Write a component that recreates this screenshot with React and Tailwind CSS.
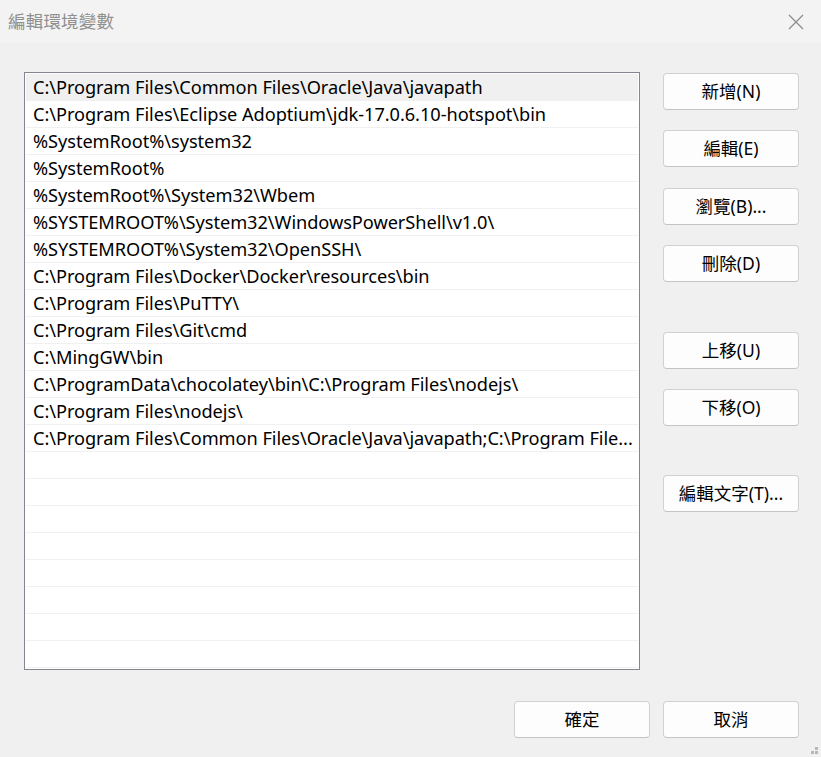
import React from 'react'

const PATHS = [
  'C:\\Program Files\\Common Files\\Oracle\\Java\\javapath',
  'C:\\Program Files\\Eclipse Adoptium\\jdk-17.0.6.10-hotspot\\bin',
  '%SystemRoot%\\system32',
  '%SystemRoot%',
  '%SystemRoot%\\System32\\Wbem',
  '%SYSTEMROOT%\\System32\\WindowsPowerShell\\v1.0\\',
  '%SYSTEMROOT%\\System32\\OpenSSH\\',
  'C:\\Program Files\\Docker\\Docker\\resources\\bin',
  'C:\\Program Files\\PuTTY\\',
  'C:\\Program Files\\Git\\cmd',
  'C:\\MingGW\\bin',
  'C:\\ProgramData\\chocolatey\\bin\\C:\\Program Files\\nodejs\\',
  'C:\\Program Files\\nodejs\\',
  // 清單本身就以省略號顯示
  'C:\\Program Files\\Common Files\\Oracle\\Java\\javapath;C:\\Program File...',
]

const TOTAL_ROWS = 22

const FONT = { fontFamily: '"Noto Sans", "Noto Sans CJK TC", sans-serif' }

function DlgButton({ children, className = '' }) {
  return (
    <button
      className={`w-[136px] h-[37px] flex items-center justify-center rounded-[4px] border border-[#d1d1d1] border-b-[#c4c4c4] bg-[#fdfdfd] text-[17.5px] text-black ${className}`}
    >
      {children}
    </button>
  )
}

export default function App() {
  const rows = Array.from({ length: TOTAL_ROWS }, (_, i) => PATHS[i] ?? '')

  return (
    <div className="w-[821px] h-[757px] flex flex-col bg-[#f0f0f0] overflow-hidden relative" style={FONT}>
      {/* 標題列 */}
      <div className="h-[43px] shrink-0 flex items-center justify-between bg-[#f3f3f3] pl-[8px] pr-[17px]">
        <span className="text-[17.5px] text-[#8f8f8f] tracking-[0.2px]">編輯環境變數</span>
        <svg width="16" height="16" viewBox="0 0 16 16" className="mt-[1px]">
          <path d="M1 1 L15 15 M15 1 L1 15" stroke="#8a8a8a" strokeWidth="1.2" fill="none" />
        </svg>
      </div>

      {/* 內容 */}
      <div className="flex pl-[24px] pt-[29px]">
        {/* 路徑清單 */}
        <div className="w-[616px] h-[598px] border border-[#858590] bg-white p-[1px]">
          {rows.map((p, i) => (
            <div
              key={i}
              className={`h-[27px] border-b border-[#f0f0f0] flex items-center pl-[7px] ${i === 0 ? 'bg-[#f0f0f0]' : ''}`}
            >
              <span className="whitespace-nowrap text-[18.2px] text-black leading-[26px] tracking-[-0.05px]">{p}</span>
            </div>
          ))}
        </div>

        {/* 右側按鈕 */}
        <div className="flex flex-col ml-[23px] pt-[1px]">
          <DlgButton>新增(N)</DlgButton>
          <DlgButton className="mt-[20px]">編輯(E)</DlgButton>
          <DlgButton className="mt-[21px]">瀏覽(B)...</DlgButton>
          <DlgButton className="mt-[20px]">刪除(D)</DlgButton>
          <DlgButton className="mt-[50px]">上移(U)</DlgButton>
          <DlgButton className="mt-[20px]">下移(O)</DlgButton>
          <DlgButton className="mt-[49px]">編輯文字(T)...</DlgButton>
        </div>
      </div>

      {/* 底部按鈕 */}
      <div className="flex justify-end gap-[13px] pr-[22px] mt-[31px]">
        <DlgButton>確定</DlgButton>
        <DlgButton>取消</DlgButton>
      </div>

      {/* 縮放把手 */}
      <div className="absolute right-[3px] bottom-[3px] grid grid-cols-2 gap-[1px]">
        <span className="w-[3px] h-[3px]" />
        <span className="w-[3px] h-[3px] bg-[#b8b8b8]" />
        <span className="w-[3px] h-[3px] bg-[#b8b8b8]" />
        <span className="w-[3px] h-[3px] bg-[#b8b8b8]" />
      </div>
    </div>
  )
}
